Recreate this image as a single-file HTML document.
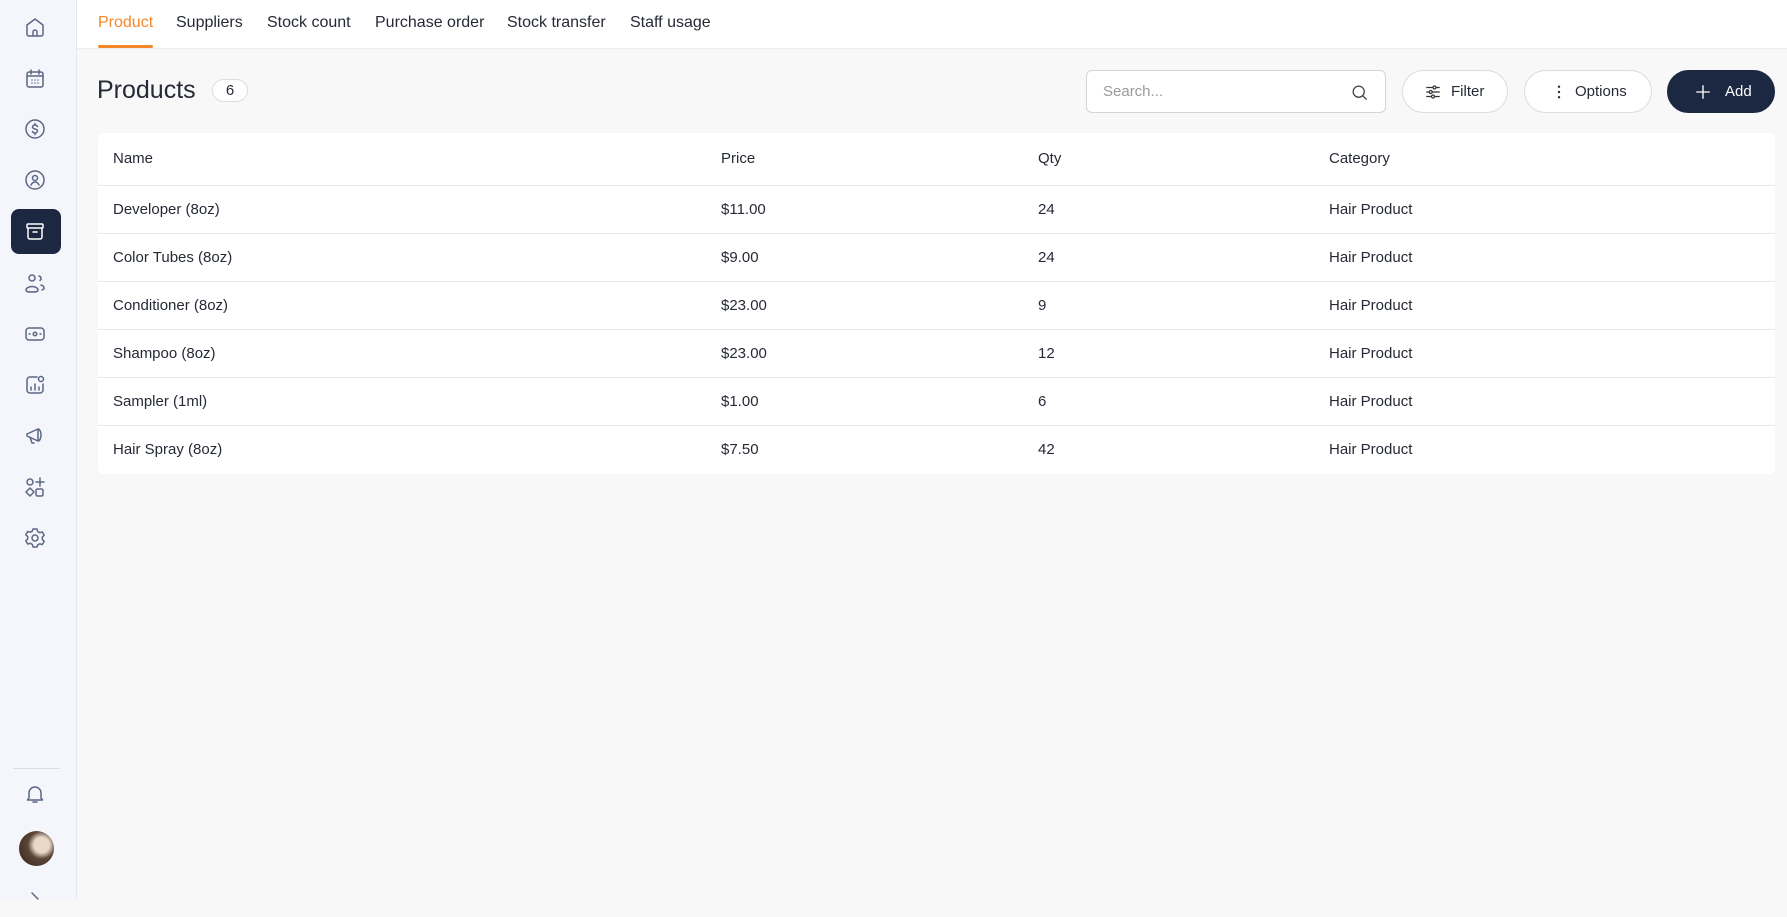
<!DOCTYPE html><html><head><style>
*{box-sizing:border-box;margin:0;padding:0}
body{width:1787px;height:899px;overflow:hidden;font-family:"Liberation Sans",sans-serif;background:#f8f8f8;color:#262a35;position:relative}
.sb{position:absolute;left:0;top:0;width:77px;height:899px;background:#f5f6fb;border-right:1px solid #e7e8ee}
.ic{position:absolute;left:23px;width:24px;height:24px}
.ic svg{width:24px;height:24px;fill:none;stroke:#5d6685;stroke-width:1.5;stroke-linecap:round;stroke-linejoin:round}
.act{position:absolute;left:11px;top:209px;width:50px;height:45px;background:#1c2741;border-radius:8px}
.top{position:absolute;left:77px;top:0;right:0;height:49px;background:#fff;border-bottom:1px solid #ececec}
.tab{position:absolute;top:14px;font-size:16px;color:#262a35}
.ul{position:absolute;left:98px;top:45px;width:55px;height:3px;background:#f5882a;border-radius:2px}
h1{position:absolute;left:97px;top:76px;font-size:25px;font-weight:normal;color:#262a35}
.badge{position:absolute;left:212px;top:79px;width:36px;height:23px;border:1px solid #ddd;border-radius:12px;background:#fff;text-align:center;font-size:15px;line-height:21px}
.btn{position:absolute;top:70px;height:43px;border:1px solid #dcdcdc;border-radius:22px;background:#fff;font-size:15px;line-height:41px}
.tbl{position:absolute;left:98px;top:133px;width:1677px;height:341px;background:#fff;border-radius:5px}
.row{position:absolute;left:0;width:100%;border-top:1px solid #e9e9e9;height:48px;font-size:15px;line-height:47px}
.row span{position:absolute}
</style></head><body>
<div class="sb">
<div class="act"></div>
<div class="ic" style="top:15px"><svg viewBox="0 0 24 24"><path d="M4 10l8-6 8 6v9a2 2 0 0 1-2 2H6a2 2 0 0 1-2-2z M10 21v-4a2 2 0 0 1 4 0v4"/></svg></div>
<div class="ic" style="top:67px"><svg viewBox="0 0 24 24"><rect x="4" y="5" width="16" height="15" rx="2"/><path d="M4 9h16M8 3v4M16 3v4M9 13h0M12 13h0M15 13h0M9 16h0M12 16h0M15 16h0"/></svg></div>
<div class="ic" style="top:117px"><svg viewBox="0 0 24 24"><circle cx="12" cy="12" r="9"/><path d="M14.5 9.5c-.5-1-1.5-1.5-2.5-1.5-1.5 0-2.5.8-2.5 2s1 1.6 2.5 2 2.5.8 2.5 2-1 2-2.5 2c-1 0-2-.5-2.5-1.5M12 6.5v1.5M12 16v1.5"/></svg></div>
<div class="ic" style="top:168px"><svg viewBox="0 0 24 24"><circle cx="12" cy="12" r="9"/><circle cx="12" cy="10" r="2.5"/><path d="M8 17c1-2 2.5-3 4-3s3 1 4 3"/></svg></div>
<div class="ic" style="top:219px"><svg viewBox="0 0 24 24" style="stroke:#fff"><rect x="4" y="5" width="16" height="4" rx="1"/><path d="M5 9v9a2 2 0 0 0 2 2h10a2 2 0 0 0 2-2V9M10 13h4"/></svg></div>
<div class="ic" style="top:271px"><svg viewBox="0 0 24 24"><circle cx="9" cy="7" r="3"/><path d="M3 19c0-2 3-3.5 6-3.5s6 1.5 6 3.5-3 2-6 2-6 0-6-2zM16 5a2.5 2.5 0 0 1 1 4.5M18 14c2 .5 3 1.5 3 3s-1 1.5-2 2"/></svg></div>
<div class="ic" style="top:322px"><svg viewBox="0 0 24 24"><rect x="3" y="6" width="18" height="12" rx="3"/><circle cx="12" cy="12" r="1.8"/><path d="M6 12h1M17 12h1"/></svg></div>
<div class="ic" style="top:373px"><svg viewBox="0 0 24 24"><path d="M14 4H7a3 3 0 0 0-3 3v10a3 3 0 0 0 3 3h10a3 3 0 0 0 3-3v-6"/><circle cx="18" cy="6" r="2.5"/><path d="M8 17v-3M12 17v-6M16 17v-3"/></svg></div>
<div class="ic" style="top:423px"><svg viewBox="0 0 24 24"><path d="M4 11l11-5v12L4 13zM15 6a3 6 0 0 1 0 12M7 14l2 6h2"/></svg></div>
<div class="ic" style="top:475px"><svg viewBox="0 0 24 24"><circle cx="7" cy="7" r="3"/><path d="M17 3v8M13 7h8M7 13l4 4-4 4-4-4z"/><rect x="13" y="14" width="7" height="7" rx="1.5"/></svg></div>
<div class="ic" style="top:526px"><svg viewBox="0 0 24 24"><circle cx="12" cy="12" r="3"/><path d="M10 3h4l.6 2.5 2.2 1.2 2.4-.8 2 3.4-1.9 1.7v2.5l1.9 1.7-2 3.4-2.4-.8-2.2 1.2L14 21h-4l-.6-2.5-2.2-1.2-2.4.8-2-3.4 1.9-1.7v-2.5L2.8 8.8l2-3.4 2.4.8 2.2-1.2z"/></svg></div>
<div style="position:absolute;left:13px;top:768px;width:47px;height:1px;background:#dcdde3"></div>
<div class="ic" style="top:782px"><svg viewBox="0 0 24 24"><path d="M6 16V11a6 6 0 0 1 12 0v5l1.5 2h-15zM10 20h4"/></svg></div>
<div style="position:absolute;left:19px;top:831px;width:35px;height:35px;border-radius:50%;background:radial-gradient(circle at 65% 40%,#e8d8c8 0 25%,#5b4636 45%,#2e231d)"></div>
<div class="ic" style="top:888px"><svg viewBox="0 0 24 24"><path d="M9 5l6 6"/></svg></div>
</div>
<div class="top">
<span class="tab" style="left:21px;color:#f5882a">Product</span>
<span class="tab" style="left:99px">Suppliers</span>
<span class="tab" style="left:190px">Stock count</span>
<span class="tab" style="left:298px">Purchase order</span>
<span class="tab" style="left:430px">Stock transfer</span>
<span class="tab" style="left:553px">Staff usage</span>
</div>
<div class="ul"></div>
<h1>Products</h1><div class="badge">6</div>
<div style="position:absolute;left:1086px;top:70px;width:300px;height:43px;border:1px solid #d4d4d4;border-radius:6px;background:#fff"><span style="position:absolute;left:16px;top:12px;font-size:15px;color:#9a9a9a">Search...</span><svg style="position:absolute;right:16px;top:12px" width="19" height="19" viewBox="0 0 24 24" fill="none" stroke="#444" stroke-width="1.6"><circle cx="11" cy="11" r="7"/><path d="M16 16l5 5"/></svg></div>
<div class="btn" style="left:1402px;width:106px"><svg style="position:absolute;left:21px;top:12px" width="18" height="18" viewBox="0 0 24 24" fill="none" stroke="#333" stroke-width="1.6"><path d="M3 6h18M3 12h18M3 18h18"/><circle cx="14" cy="6" r="2" fill="#fff"/><circle cx="9" cy="12" r="2" fill="#fff"/><circle cx="12" cy="18" r="2" fill="#fff"/></svg><span style="position:absolute;left:48px">Filter</span></div>
<div class="btn" style="left:1524px;width:128px"><svg style="position:absolute;left:25px;top:12px" width="18" height="18" viewBox="0 0 24 24" fill="#333"><circle cx="12" cy="5" r="1.6"/><circle cx="12" cy="12" r="1.6"/><circle cx="12" cy="19" r="1.6"/></svg><span style="position:absolute;left:50px">Options</span></div>
<div class="btn" style="left:1667px;width:108px;background:#1c2741;border-color:#1c2741;color:#fff"><svg style="position:absolute;left:26px;top:12px" width="18" height="18" viewBox="0 0 24 24" fill="none" stroke="#fff" stroke-width="1.8"><path d="M12 3v18M3 12h18"/></svg><span style="position:absolute;left:57px">Add</span></div>
<div class="tbl">
<div class="row" style="top:0;border-top:none;height:52px;line-height:52px"><span style="left:15px">Name</span><span style="left:623px">Price</span><span style="left:940px">Qty</span><span style="left:1231px">Category</span></div>
<div class="row" style="top:52px"><span style="left:15px">Developer (8oz)</span><span style="left:623px">$11.00</span><span style="left:940px">24</span><span style="left:1231px">Hair Product</span></div>
<div class="row" style="top:100px"><span style="left:15px">Color Tubes (8oz)</span><span style="left:623px">$9.00</span><span style="left:940px">24</span><span style="left:1231px">Hair Product</span></div>
<div class="row" style="top:148px"><span style="left:15px">Conditioner (8oz)</span><span style="left:623px">$23.00</span><span style="left:940px">9</span><span style="left:1231px">Hair Product</span></div>
<div class="row" style="top:196px"><span style="left:15px">Shampoo (8oz)</span><span style="left:623px">$23.00</span><span style="left:940px">12</span><span style="left:1231px">Hair Product</span></div>
<div class="row" style="top:244px"><span style="left:15px">Sampler (1ml)</span><span style="left:623px">$1.00</span><span style="left:940px">6</span><span style="left:1231px">Hair Product</span></div>
<div class="row" style="top:292px"><span style="left:15px">Hair Spray (8oz)</span><span style="left:623px">$7.50</span><span style="left:940px">42</span><span style="left:1231px">Hair Product</span></div>
</div>
</body></html>
